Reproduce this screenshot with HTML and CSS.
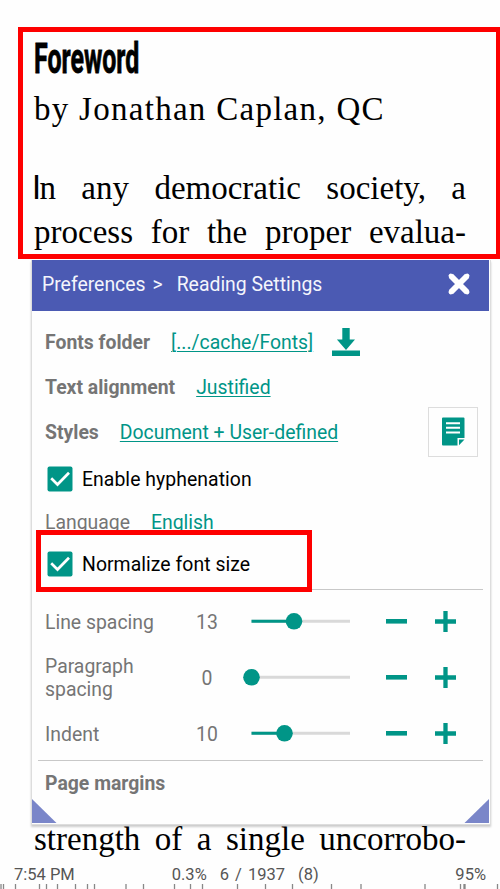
FILE: index.html
```html
<!DOCTYPE html>
<html lang="en">
<head>
<meta charset="utf-8">
<title>Reading Settings</title>
<link rel="stylesheet" href="styles.css">
</head>
<body>
<div class="screen">
  <main class="book">
    <h1 class="title"><span>Foreword</span></h1>
    <p class="byline">by Jonathan Caplan, QC</p>
    <p class="line first"><span class="initial">I</span>n any democratic society, a</p>
    <p class="line second">process for the proper evalua-</p>
  </main>

  <section class="panel">
    <header class="bar">
      <span class="crumb">Preferences</span><span class="sep">&gt;</span><span class="here">Reading Settings</span>
      <svg class="close" width="24" height="24" viewBox="0 0 24 24"><path d="M3.800 3.800 20.200 20.200M20.200 3.800 3.800 20.200" stroke="#fff" stroke-width="5.800"/><path d="M3.800 3.800 20.200 20.200M20.200 3.800 3.800 20.200" stroke="#fff" stroke-width="4.500" stroke-linecap="round"/></svg>
    </header>
    <div class="body">
      <div class="row"><b>Fonts folder</b><a>[.../cache/Fonts]</a>
        <svg class="download" width="28" height="29" viewBox="0 0 28 29"><path d="M10.300 0h7.400v11.600H23L14 22 4.900 11.600h5.400zM0 22.600h28v5.400H0z" fill="#009587"/></svg></div>
      <div class="row"><b>Text alignment</b><a>Justified</a></div>
      <div class="row"><b>Styles</b><a>Document + User-defined</a>
        <span class="note"><svg width="23" height="29" viewBox="0 0 23 29"><path d="M1 .5h20.500q1 0 1 1V21h-7v7.500H1q-1 0-1-1v-26q0-1 1-1z" fill="#009587"/><path d="M17 28.200V22.500h5.500z" fill="#009587"/><path d="M4 6.200h14M4 10.700h14M4 15.500h14" stroke="#fff" stroke-width="2"/></svg></span></div>
      <label class="row check hyph"><svg width="26" height="26" viewBox="0 0 26 26"><rect x=".5" y=".5" width="25" height="25" rx="2" fill="#009587"/><path d="m4.200 12.300 6.300 6.200L22 6.700" fill="none" stroke="#fff" stroke-width="2.700"/></svg><span>Enable hyphenation</span></label>
      <div class="row lang"><span>Language</span><a>English</a></div>
      <label class="row check norm"><svg width="26" height="26" viewBox="0 0 26 26"><rect x=".5" y=".5" width="25" height="25" rx="2" fill="#009587"/><path d="m4.200 12.300 6.300 6.200L22 6.700" fill="none" stroke="#fff" stroke-width="2.700"/></svg><span>Normalize font size</span></label>
      <hr>
      <div class="sliders">
        <div class="slider"><span>Line spacing</span><span class="num">13</span>
          <svg class="track" width="109" height="18" viewBox="-2.500 0 109 18"><path d="M6 8.300h98.500" stroke="#d9d9d9" stroke-width="3"/><path d="M6 8.300h42" stroke="#009587" stroke-width="3"/><circle cx="48.500" cy="8.300" r="8.300" fill="#009587"/></svg>
          <svg class="minus" width="21" height="22" viewBox="0 0 21 22"><path d="M0 10.300h21" stroke="#009587" stroke-width="4.600"/></svg>
          <svg class="plus" width="21" height="22" viewBox="0 0 21 22"><path d="M0 10.500h21M10.500 0v21" stroke="#009587" stroke-width="4.300"/></svg></div>
        <div class="slider"><span>Paragraph<br>spacing</span><span class="num">0</span>
          <svg class="track" width="109" height="18" viewBox="-2.500 0 109 18"><path d="M6 8.300h98.500" stroke="#d9d9d9" stroke-width="3"/><circle cx="6" cy="8.300" r="8.300" fill="#009587"/></svg>
          <svg class="minus" width="21" height="22" viewBox="0 0 21 22"><path d="M0 10.300h21" stroke="#009587" stroke-width="4.600"/></svg>
          <svg class="plus" width="21" height="22" viewBox="0 0 21 22"><path d="M0 10.500h21M10.500 0v21" stroke="#009587" stroke-width="4.300"/></svg></div>
        <div class="slider"><span>Indent</span><span class="num">10</span>
          <svg class="track" width="109" height="18" viewBox="-2.500 0 109 18"><path d="M6 8.300h98.500" stroke="#d9d9d9" stroke-width="3"/><path d="M6 8.300h32" stroke="#009587" stroke-width="3"/><circle cx="39" cy="8.300" r="8.300" fill="#009587"/></svg>
          <svg class="minus" width="21" height="22" viewBox="0 0 21 22"><path d="M0 10.300h21" stroke="#009587" stroke-width="4.600"/></svg>
          <svg class="plus" width="21" height="22" viewBox="0 0 21 22"><path d="M0 10.500h21M10.500 0v21" stroke="#009587" stroke-width="4.300"/></svg></div>
      </div>
      <hr>
      <div class="margins"><b>Page margins</b></div>
    </div>
    <footer class="grips"><svg width="25" height="25"><path d="M0 0v24h24.500z" fill="#7a86c9"/></svg><svg width="25" height="25"><path d="M25 0v24H.5z" fill="#7a86c9"/></svg></footer>
  </section>

  <p class="line last">strength of a single uncorrobo-</p>
  <footer class="status"><span>7:54 PM</span><span class="pct">0.3%</span><span class="page">6 / 1937</span><span class="left">(8)</span><span class="battery">95%</span></footer>
  <svg class="ticks" width="500" height="6" viewBox="0 0 500 6"><path d="M1 0v6M3.500 0v6M15.500 0v6M39.500 0v6M46.500 0v6M57.500 0v6M75.500 0v6M87.500 0v6M94.500 0v6M126 0v6M143.500 0v6M174.500 0v6M190.500 0v6M202.500 0v6M237.500 0v6M265.500 0v6M292.500 0v6M331.500 0v6M361 0v6M425 0v6M460.500 0v6M464 0v6M465 0v6M497.500 0v6" stroke="#888" stroke-width="1.300"/></svg>

  <div class="mark mark-text"></div>
  <div class="mark mark-option"></div>
</div>
</body>
</html>
```
FILE: styles.css
```css
* { box-sizing: border-box; }
body { margin: 0; background: #fefefe; }
h1, p { margin: 0; font-weight: normal; }
.screen { position: relative; width: 500px; height: 889px; overflow: hidden; background: #fefefe; font: 19.4px/23px Roboto, sans-serif; color: #757575; }
svg { display: block; flex: none; }

.book { height: 260px; padding: 37px 34px 0; color: #000; }
.title { height: 42px; font: bold 43px/42px Roboto, sans-serif; white-space: nowrap; }
.title span { display: inline-block; transform: scaleX(.58); transform-origin: 0 50%; -webkit-text-stroke: .8px #000; }
.byline { height: 43px; margin-top: 9px; font: 33px/43px "Liberation Serif", serif; letter-spacing: 1.28px; white-space: nowrap; }
.line { height: 43px; font: 33px/43px "Liberation Serif", serif; text-align: justify; text-align-last: justify; white-space: nowrap; color: #000; }
.first { margin-top: 36px; }
.second { padding-top: 1px; }
.initial { font-family: Roboto, sans-serif; line-height: 1; margin-left: -2px; margin-right: -1.5px; }

.panel { width: 460px; height: 565px; margin-left: 31px; border: 1px solid #ddd; border-top: 0; box-shadow: 0 2px 2px #ccc; background: #fefefe; }
.bar { display: flex; align-items: center; height: 51px; margin-right: 1px; padding: 0 18px 3px 10px; background: #4b5ab3; color: #f4f5fc; }
.sep { margin-left: 7px; }
.here { margin-left: 14px; }
.close { margin-left: auto; }
.body { height: 488px; padding: 9px 7px 0 6px; }
.row { display: flex; align-items: center; height: 45px; padding-left: 7px; }
a { color: #009587; text-decoration: underline; text-decoration-thickness: 1px; text-underline-offset: 2px; margin-left: 21px; }
.download { margin: -1px 0 0 18.5px; }
.note { display: flex; align-items: center; justify-content: center; width: 50px; height: 50px; margin: -2px 5px 0 auto; border: 1px solid #ddd; }
.check { color: #000; padding-left: 9px; }
.check svg { margin-top: -1px; }
.check span { margin-left: 9px; letter-spacing: .05px; }
.hyph { height: 49px; }
.lang { height: 37px; }
.norm { height: 48px; padding-bottom: 2px; }
hr { height: 1px; margin: 0; border: 0; background: #c8c8c8; }

.sliders { padding-top: 4px; height: 170px; }
.slider { display: grid; grid-template-columns: 118px 86px 102.5px 35px 21px 28px 21px; align-items: center; height: 56px; padding-left: 7px; }
.num { text-align: center; padding-left: 2px; }
.track { grid-column: 3; margin-left: -6.5px; }
.minus { grid-column: 5; }
.plus { grid-column: 7; }
.minus, .plus { margin-left: -.5px; }
.margins { padding: 11px 0 0 7px; }
.grips { display: flex; justify-content: space-between; padding-right: 1px; height: 25px; }

.last { margin: -7px 34px 0; }
.status { display: flex; align-items: center; height: 22px; margin-top: 2px; font-size: 16.5px; line-height: 22px; color: #555; white-space: pre; padding: 2px 14px 0; }
.pct { margin-left: 97px; }
.page { margin-left: 13px; word-spacing: 2px; }
.left { margin-left: 13px; }
.battery { margin-left: auto; }
.ticks { margin-top: -1px; }

.mark { position: absolute; border: 5px solid #fe0000; pointer-events: none; }
.mark-text { left: 18px; top: 27px; width: 483px; height: 232px; }
.mark-option { left: 36px; top: 530px; width: 276px; height: 62px; }
```
